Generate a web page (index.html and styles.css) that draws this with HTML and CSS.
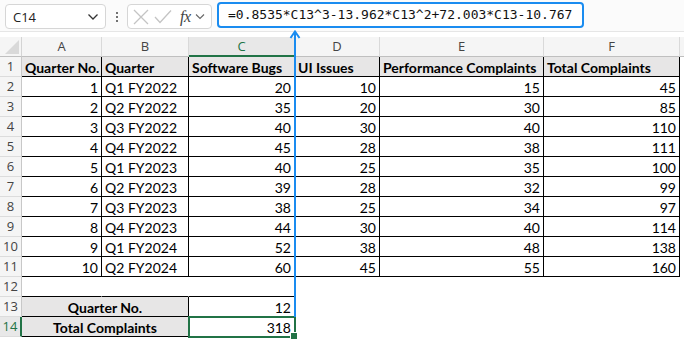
FILE: index.html
```html
<!DOCTYPE html>
<html lang="en">
<head>
  <meta charset="UTF-8" />
  <title>Software Complaints - Formula</title>
  <link rel="stylesheet" href="styles.css">
</head>
<body>
  <div class="toolbar">
    <div class="name-box">
      <span>C14</span>
      <svg width="12" height="8" viewBox="0 0 12 8"><path d="M1.5 1.5 L6 6 L10.5 1.5" fill="none" stroke="#333" stroke-width="1.3"/></svg>
    </div>
    <div class="dots"><i></i><i></i><i></i></div>
    <div class="fx-box">
      <svg width="18" height="18" viewBox="0 0 18 18"><path d="M2 2 L16 16 M16 2 L2 16" stroke="#c4c4c4" stroke-width="1.3"/></svg>
      <svg width="18" height="18" viewBox="0 0 18 18"><path d="M1 9 L6 14.5 L17 2.5" fill="none" stroke="#c4c4c4" stroke-width="1.3"/></svg>
      <span class="fx">fx</span>
      <svg width="10" height="7" viewBox="0 0 10 7"><path d="M1 1.5 L5 5.5 L9 1.5" fill="none" stroke="#666" stroke-width="1.1"/></svg>
    </div>
    <div class="formula">=0.8535*C13^3-13.962*C13^2+72.003*C13-10.767</div>
  </div>

  <div class="sheet">
    <div class="corner"><svg width="14" height="14" viewBox="0 0 14 14"><path d="M14 0 L14 14 L0 14 Z" fill="#d9d9d9"/></svg></div>
    <div class="ch">A</div>
    <div class="ch">B</div>
    <div class="ch sel">C</div>
    <div class="ch">D</div>
    <div class="ch">E</div>
    <div class="ch">F</div>
    <div class="ch end"></div>

    <div class="rh">1</div>
    <div class="t hd">Quarter No.</div>
    <div class="t hd">Quarter</div>
    <div class="t hd">Software Bugs</div>
    <div class="t hd">UI Issues</div>
    <div class="t hd">Performance Complaints</div>
    <div class="t hd">Total Complaints</div>
    <div class="c end"></div>

    <div class="rh">2</div>
    <div class="t n">1</div><div class="t">Q1 FY2022</div><div class="t n">20</div><div class="t n">10</div><div class="t n">15</div><div class="t n">45</div><div class="c end"></div>
    <div class="rh">3</div>
    <div class="t n">2</div><div class="t">Q2 FY2022</div><div class="t n">35</div><div class="t n">20</div><div class="t n">30</div><div class="t n">85</div><div class="c end"></div>
    <div class="rh">4</div>
    <div class="t n">3</div><div class="t">Q3 FY2022</div><div class="t n">40</div><div class="t n">30</div><div class="t n">40</div><div class="t n">110</div><div class="c end"></div>
    <div class="rh">5</div>
    <div class="t n">4</div><div class="t">Q4 FY2022</div><div class="t n">45</div><div class="t n">28</div><div class="t n">38</div><div class="t n">111</div><div class="c end"></div>
    <div class="rh">6</div>
    <div class="t n">5</div><div class="t">Q1 FY2023</div><div class="t n">40</div><div class="t n">25</div><div class="t n">35</div><div class="t n">100</div><div class="c end"></div>
    <div class="rh">7</div>
    <div class="t n">6</div><div class="t">Q2 FY2023</div><div class="t n">39</div><div class="t n">28</div><div class="t n">32</div><div class="t n">99</div><div class="c end"></div>
    <div class="rh">8</div>
    <div class="t n">7</div><div class="t">Q3 FY2023</div><div class="t n">38</div><div class="t n">25</div><div class="t n">34</div><div class="t n">97</div><div class="c end"></div>
    <div class="rh">9</div>
    <div class="t n">8</div><div class="t">Q4 FY2023</div><div class="t n">44</div><div class="t n">30</div><div class="t n">40</div><div class="t n">114</div><div class="c end"></div>
    <div class="rh">10</div>
    <div class="t n">9</div><div class="t">Q1 FY2024</div><div class="t n">52</div><div class="t n">38</div><div class="t n">48</div><div class="t n">138</div><div class="c end"></div>
    <div class="rh">11</div>
    <div class="t n">10</div><div class="t">Q2 FY2024</div><div class="t n">60</div><div class="t n">45</div><div class="t n">55</div><div class="t n">160</div><div class="c end"></div>

    <div class="rh">12</div>
    <div class="c above"></div><div class="c above"></div><div class="c above"></div><div class="c"></div><div class="c"></div><div class="c"></div><div class="c end"></div>

    <div class="rh">13</div>
    <div class="t hd mid span2">Quarter No.</div><div class="t n">12</div><div class="c"></div><div class="c"></div><div class="c"></div><div class="c end"></div>

    <div class="rh sel">14</div>
    <div class="t hd mid span2">Total Complaints</div><div class="t n active">318</div><div class="c"></div><div class="c"></div><div class="c"></div><div class="c end"></div>

    <svg class="trace" width="12" height="310" viewBox="0 0 12 310">
      <path d="M6 2 L6 287" stroke="#1a8cf0" stroke-width="2"/>
      <path d="M1.5 8 L6 1.5 L10.5 8" fill="none" stroke="#1a8cf0" stroke-width="2"/>
    </svg>
  </div>
</body>
</html>
```

FILE: styles.css
```css
* {
  box-sizing: border-box;
}

body {
  margin: 0;
  background-color: #fff;
  font-family: "Open Sans", "Noto Sans", sans-serif;
  width: 684px;
  height: 342px;
  overflow: hidden;
}

/* Formula bar */
.toolbar {
  display: flex;
  align-items: center;
  height: 32px;
  padding: 0 0 0 5px;
  background-color: #fbfbfb;
  border-bottom: 1px solid #e6e6e6;
}

.name-box {
  width: 101px;
  height: 25px;
  margin-top: 2px;
  display: flex;
  align-items: center;
  justify-content: space-between;
  padding: 0 6px 0 7px;
  background: #fff;
  border: 1px solid #d6d6d6;
  border-radius: 4px;
  font-size: 13px;
  color: #222;
}

.dots {
  width: 21px;
  display: flex;
  flex-direction: column;
  align-items: center;
  gap: 2px;
  margin-top: 2px;
}

.dots i {
  width: 2px;
  height: 2px;
  background: #444;
  border-radius: 1px;
}

.fx-box {
  width: 85px;
  height: 25px;
  margin-top: 2px;
  display: flex;
  align-items: center;
  gap: 4px;
  padding: 0 3px 0 4px;
  background: #fff;
  border: 1px solid #d6d6d6;
  border-radius: 4px;
}

.fx {
  font-family: "Liberation Serif", serif;
  font-style: italic;
  font-size: 16px;
  color: #444;
  margin-left: 4px;
  letter-spacing: -0.5px;
}

.formula {
  width: 367px;
  height: 26px;
  margin-left: 5px;
  margin-bottom: 2px;
  padding: 0 0 0 9px;
  display: flex;
  align-items: center;
  background: #fff;
  border: 2px solid #1a8cf0;
  border-radius: 4px;
  font-family: "DejaVu Sans Mono", monospace;
  font-size: 13px;
  color: #111;
}

/* Worksheet grid */
.sheet {
  position: relative;
  margin-top: 5px;
  display: grid;
  grid-template-columns: 22px 80px 87px 106px 85px 164px 136px 4px;
  grid-template-rows: 20px repeat(14, 20px);
  font-family: "Lato", sans-serif;
  font-size: 14px;
  color: #000;
}

.corner {
  background: #f5f5f5;
  border-right: 1px solid #d4d4d4;
  border-bottom: 1px solid #bfbfbf;
  display: flex;
  align-items: flex-end;
  justify-content: flex-end;
  padding: 0 2px 2px 0;
}

.ch {
  background: #f5f5f5;
  border-right: 1px solid #d9d9d9;
  border-bottom: 1px solid #bfbfbf;
  text-align: center;
  font-family: "Open Sans", sans-serif;
  font-size: 13px;
  line-height: 19px;
  color: #444;
}

.ch.sel {
  background: #e8e8e8;
  color: #217346;
  border-bottom: 2px solid #217346;
}

.ch.end {
  border-right: none;
}

.rh {
  background: #f5f5f5;
  border-right: 1px solid #c8c8c8;
  border-bottom: 1px solid #dcdcdc;
  text-align: center;
  font-family: "Open Sans", sans-serif;
  font-size: 13px;
  line-height: 19px;
  color: #444;
}

.rh.sel {
  color: #217346;
  background: #e8e8e8;
  border-right: 2px solid #217346;
}

/* empty cells: gridlines are switched off on this sheet */
.c {
  border-right: 1px solid transparent;
  border-bottom: 1px solid transparent;
}

.c.above {
  border-bottom-color: #000;
}

.c.end {
  border-right: none;
}

.t {
  position: relative;
  border-right: 1px solid #000;
  border-bottom: 1px solid #000;
  padding: 1px 3px 0;
  line-height: 20px;
  white-space: nowrap;
}

.t.n {
  text-align: right;
}

.t.hd {
  background: #e7e6e6;
  font-weight: 700;
}

.t.mid {
  text-align: center;
}

.span2 {
  grid-column: span 2;
}

.t.active {
  outline: 2px solid #217346;
  outline-offset: -1px;
}

.t.active::after {
  content: "";
  position: absolute;
  right: -4px;
  bottom: -4px;
  width: 6px;
  height: 6px;
  background: #217346;
  border: 1px solid #fff;
}

/* precedent arrow from the formula bar */
.trace {
  position: absolute;
  left: 289px;
  top: -7px;
}
```
